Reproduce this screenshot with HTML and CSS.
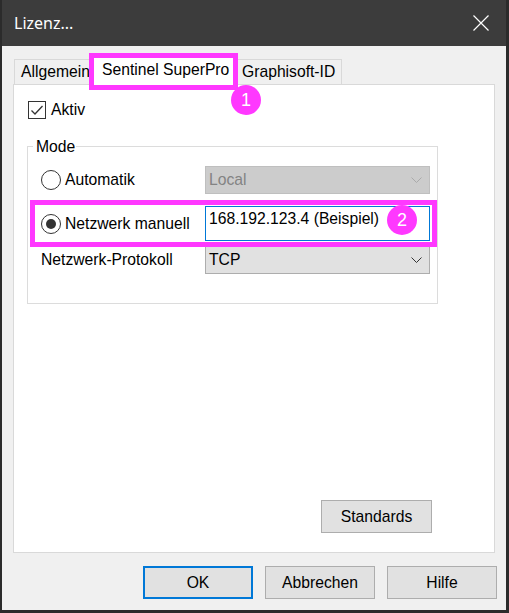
FILE: index.html
```html
<!DOCTYPE html>
<html lang="de">
<head>
    <meta charset="UTF-8">
    <meta name="viewport" content="width=device-width, initial-scale=1.0">
    <title>Lizenz...</title>
    <link rel="stylesheet" href="styles.css">
</head>
<body>
    <div class="window">
        <header class="titlebar">
            <span class="title">Lizenz...</span>
            <svg class="close" width="16" height="16" viewBox="0 0 16 16">
                <path d="M0.5 0.5 L15.5 15.5 M15.5 0.5 L0.5 15.5" stroke="#fff" stroke-width="1.2" fill="none"/>
            </svg>
        </header>
        <main class="dialog">
            <div class="tabs">
                <div class="tab tab-allg">Allgemein</div>
                <div class="tab tab-active">
                    Sentinel SuperPro
                    <span class="hl hl-tab"></span>
                    <span class="badge badge-tab">1</span>
                </div>
                <div class="tab tab-graph">Graphisoft-ID</div>
            </div>
            <div class="panel">
                <div class="check-row">
                    <span class="checkbox">
                        <svg width="16" height="16" viewBox="0 0 16 16">
                            <path d="M2.5 8.5 L6 12 L13.5 4" stroke="#333" stroke-width="1.3" fill="none"/>
                        </svg>
                    </span>
                    <span>Aktiv</span>
                </div>
                <div class="group">
                    <div class="group-title">Mode</div>
                    <div class="row row1">
                        <div class="radio-label"><span class="radio"></span>Automatik</div>
                        <div class="combo disabled">
                            <span>Local</span>
                            <svg width="11" height="6" viewBox="0 0 11 6"><path d="M0.5 0.5 L5.5 5.5 L10.5 0.5" stroke="#aaa" stroke-width="1" fill="none"/></svg>
                        </div>
                    </div>
                    <div class="row row2">
                        <div class="radio-label"><span class="radio checked"></span>Netzwerk manuell</div>
                        <div class="field">
                            168.192.123.4 (Beispiel)
                            <span class="badge badge-field">2</span>
                        </div>
                        <span class="hl hl-row"></span>
                    </div>
                    <div class="row row3">
                        <div class="plain-label">Netzwerk-Protokoll</div>
                        <div class="combo">
                            <span>TCP</span>
                            <svg width="11" height="6" viewBox="0 0 11 6"><path d="M0.5 0.5 L5.5 5.5 L10.5 0.5" stroke="#333" stroke-width="1" fill="none"/></svg>
                        </div>
                    </div>
                </div>
                <div class="panel-foot">
                    <button class="btn btn-std">Standards</button>
                </div>
            </div>
            <div class="actions">
                <button class="btn btn-default">OK</button>
                <button class="btn">Abbrechen</button>
                <button class="btn">Hilfe</button>
            </div>
        </main>
    </div>
</body>
</html>
```

FILE: styles.css
```css
body {
    margin: 0;
    background-color: #2b2b2b;
    font-family: "Liberation Sans", Arial, sans-serif;
    font-size: 15.7px;
    color: #000;
}
.window {
    margin: 0 3px 3px 2px;
    height: 610px;
    background-color: #f0f0f0;
    display: flex;
    flex-direction: column;
}
.titlebar {
    height: 46px;
    background-color: #3c3c3c;
    color: #fff;
    display: flex;
    align-items: center;
    justify-content: space-between;
    padding: 0 17px 0 12px;
    font-family: "Noto Sans", sans-serif;
    font-size: 16px;
}
.close {
    display: block;
}
.dialog {
    flex: 1;
    display: flex;
    flex-direction: column;
    padding: 6px 11px 0 11px;
}
.tabs {
    display: flex;
    align-items: flex-end;
    height: 32px;
    padding-left: 1px;
    position: relative;
    z-index: 1;
}
.tab {
    box-sizing: border-box;
    height: 25px;
    line-height: 24px;
    border: 1px solid #d9d9d9;
    border-bottom: none;
    background-color: #f0f0f0;
    padding-left: 6px;
    white-space: nowrap;
}
.tab-allg {
    width: 76px;
}
.tab-active {
    width: 145px;
    height: 31px;
    line-height: 29px;
    margin-bottom: -1px;
    padding-left: 11px;
    background-color: #fff;
    position: relative;
}
.tab-graph {
    width: 107px;
}
.hl {
    position: absolute;
    box-sizing: border-box;
    border: 5px solid #ff38ff;
}
.hl-tab {
    left: -2px;
    top: -2px;
    width: 149px;
    height: 37px;
}
.badge {
    position: absolute;
    width: 30px;
    height: 30px;
    border-radius: 50%;
    background-color: #ff38ff;
    color: #fff;
    font-size: 18px;
    line-height: 30px;
    text-align: center;
}
.badge-tab {
    left: 140px;
    top: 30px;
}
.panel {
    box-sizing: border-box;
    height: 469px;
    border: 1px solid #d9d9d9;
    background-color: #fff;
    padding: 16px 0 19px 14px;
    display: flex;
    flex-direction: column;
}
.check-row {
    display: flex;
    align-items: center;
    gap: 5px;
    height: 18px;
}
.checkbox {
    box-sizing: border-box;
    width: 18px;
    height: 18px;
    border: 1px solid #333;
    display: flex;
    align-items: center;
    justify-content: center;
}
.group {
    box-sizing: border-box;
    width: 411px;
    margin: 27px 0 0 -1px;
    border: 1px solid #dcdcdc;
    padding: 0 0 29px 13px;
}
.group-title {
    width: fit-content;
    margin: -9px 0 0 -8px;
    padding: 0 1px 0 3px;
    line-height: 18px;
    background-color: #fff;
}
.row {
    display: grid;
    grid-template-columns: 164px 225px;
    align-items: center;
}
.row1 {
    height: 28px;
    margin-top: 10px;
}
.row2 {
    height: 35px;
    margin-top: 12px;
    position: relative;
}
.row3 {
    height: 28px;
    margin-top: 5px;
}
.radio-label {
    display: flex;
    align-items: center;
    gap: 4px;
}
.radio {
    box-sizing: border-box;
    width: 20px;
    height: 20px;
    border: 1px solid #333;
    border-radius: 50%;
    display: flex;
    align-items: center;
    justify-content: center;
}
.radio.checked::after {
    content: "";
    width: 10px;
    height: 10px;
    border-radius: 50%;
    background-color: #333;
}
.combo {
    box-sizing: border-box;
    height: 28px;
    border: 1px solid #adadad;
    background-color: #e1e1e1;
    display: flex;
    align-items: center;
    justify-content: space-between;
    padding: 0 7px 0 3px;
}
.combo.disabled {
    background-color: #cccccc;
    border-color: #bfbfbf;
    color: #838383;
}
.field {
    box-sizing: border-box;
    height: 35px;
    border: 1px solid #0078d7;
    background-color: #fff;
    padding: 3px 0 0 3px;
    line-height: 18px;
    position: relative;
}
.badge-field {
    left: 181px;
    top: -2px;
}
.hl-row {
    left: -11px;
    top: -6px;
    width: 407px;
    height: 47px;
}
.panel-foot {
    margin-top: auto;
    display: flex;
    justify-content: flex-end;
    padding-right: 62px;
}
.btn {
    box-sizing: border-box;
    height: 33px;
    width: 110px;
    border: 1px solid #adadad;
    background-color: #e1e1e1;
    font-family: "Liberation Sans", Arial, sans-serif;
    font-size: 15.7px;
    color: #000;
    padding: 0;
}
.btn-std {
    width: 111px;
}
.btn-default {
    border: 2px solid #0078d7;
}
.actions {
    display: flex;
    justify-content: flex-end;
    gap: 12px;
    margin: 13px -2px 0 0;
}
```
